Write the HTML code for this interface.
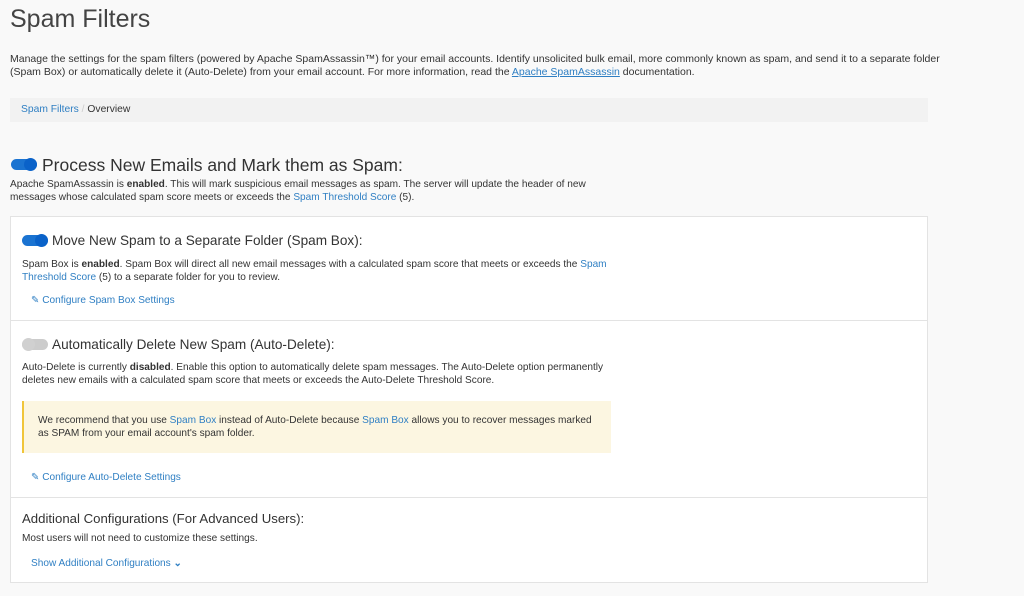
<!DOCTYPE html>
<html><head><meta charset="utf-8"><style>
*{margin:0;padding:0;box-sizing:border-box}
body{width:1024px;height:596px;background:#f9f9f9;font-family:"Liberation Sans",sans-serif;color:#333;font-size:10.1px;position:relative;overflow:hidden}
.a{position:absolute;white-space:nowrap}
a{color:#2f7fc3;text-decoration:none}
.tg{position:absolute;width:26px;height:11px;border-radius:6px;background:#1a73d1}
.tg:after{content:"";position:absolute;right:0;top:-1px;width:13px;height:13px;border-radius:50%;background:#0a62c9}
.tg.off{background:#ccc}
.tg.off:after{left:0;right:auto;background:#d0d0d0}
</style></head><body>
<div class="a" style="left:10px;top:5px;font-size:25px;color:#444;font-weight:300">Spam Filters</div>
<div class="a" style="left:10px;top:53px;line-height:13px;font-size:10.5px">Manage the settings for the spam filters (powered by Apache SpamAssassin™) for your email accounts. Identify unsolicited bulk email, more commonly known as spam, and send it to a separate folder<br>(Spam Box) or automatically delete it (Auto-Delete) from your email account. For more information, read the <a style="text-decoration:underline">Apache SpamAssassin</a> documentation.</div>
<div class="a" style="left:10px;top:98px;width:918px;height:24px;background:#f2f2f2;padding:6px 11px;font-size:10.3px"><a>Spam Filters</a> <span style="color:#ccc">/</span> Overview</div>
<div class="tg" style="left:11px;top:159px"></div>
<div class="a" style="left:42px;top:155px;font-size:17.5px;color:#333">Process New Emails and Mark them as Spam:</div>
<div class="a" style="left:10px;top:178px;line-height:13px">Apache SpamAssassin is <b>enabled</b>. This will mark suspicious email messages as spam. The server will update the header of new<br>messages whose calculated spam score meets or exceeds the <a>Spam Threshold Score</a> (5).</div>
<div class="a" style="left:10px;top:216px;width:918px;height:367px;background:#fff;border:1px solid #e3e3e3"></div>
<div class="a" style="left:11px;top:320px;width:916px;height:1px;background:#e3e3e3"></div>
<div class="a" style="left:11px;top:497px;width:916px;height:1px;background:#e3e3e3"></div>
<div class="tg" style="left:22px;top:235px"></div>
<div class="a" style="left:52px;top:233px;font-size:13.6px">Move New Spam to a Separate Folder (Spam Box):</div>
<div class="a" style="left:22px;top:258px;line-height:13px">Spam Box is <b>enabled</b>. Spam Box will direct all new email messages with a calculated spam score that meets or exceeds the <a>Spam</a><br><a>Threshold Score</a> (5) to a separate folder for you to review.</div>
<div class="a" style="left:31px;top:295px"><a>✎ Configure Spam Box Settings</a></div>
<div class="tg off" style="left:22px;top:339px"></div>
<div class="a" style="left:52px;top:337px;font-size:13.6px">Automatically Delete New Spam (Auto-Delete):</div>
<div class="a" style="left:22px;top:361px;line-height:13px">Auto-Delete is currently <b>disabled</b>. Enable this option to automatically delete spam messages. The Auto-Delete option permanently<br>deletes new emails with a calculated spam score that meets or exceeds the Auto-Delete Threshold Score.</div>
<div class="a" style="left:22px;top:401px;width:589px;height:52px;background:#fcf6e1;border-left:2px solid #f0c53a;padding:13px 0 0 14px;line-height:13px">We recommend that you use <a>Spam Box</a> instead of Auto-Delete because <a>Spam Box</a> allows you to recover messages marked<br>as SPAM from your email account's spam folder.</div>
<div class="a" style="left:31px;top:472px"><a>✎ Configure Auto-Delete Settings</a></div>
<div class="a" style="left:22px;top:511px;font-size:13.2px">Additional Configurations (For Advanced Users):</div>
<div class="a" style="left:22px;top:533px">Most users will not need to customize these settings.</div>
<div class="a" style="left:31px;top:558px"><a>Show Additional Configurations <b>⌄</b></a></div>
</body></html>
